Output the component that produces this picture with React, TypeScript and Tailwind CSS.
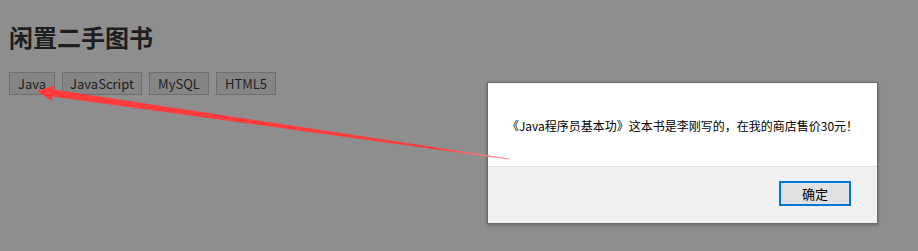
import React from 'react';

const tags = [
  { name: 'Java', w: 'w-[46px]' },
  { name: 'JavaScript', w: 'w-[80px]' },
  { name: 'MySQL', w: 'w-[60px]' },
  { name: 'HTML5', w: 'w-[60px]' },
];

export default function App() {
  return (
    <div className="relative w-[918px] h-[251px] overflow-hidden bg-[#8e8e8e] font-['Noto_Sans_CJK_SC',sans-serif]">
      {/* Page content (dimmed by modal overlay) */}
      <div className="pl-[9px] pt-[23px]">
        <h1 className="text-[24px] leading-[28px] font-bold text-[#1e1e1e]">闲置二手图书</h1>
        <div className="flex gap-[7px] mt-[21px]">
          {tags.map((t) => (
            <button
              key={t.name}
              className={`${t.w} h-[23px] border border-[#6f6f6f] bg-[#858585] text-[13px] leading-none text-[#1e1e1e]`}
            >
              {t.name}
            </button>
          ))}
        </div>
      </div>

      {/* Alert dialog */}
      <div className="absolute left-[487px] top-[82px] w-[391px] h-[142px] flex flex-col bg-white border border-[#6b6b6b] shadow-[0_1px_3px_rgba(0,0,0,0.3)]">
        <div className="h-[83px] flex items-center justify-center pt-[3px] text-[12px] text-black">
          《Java程序员基本功》这本书是李刚写的，在我的商店售价30元！
        </div>
        <div className="flex-1 flex justify-end items-start pt-[14px] pr-[26px] bg-[#f0f0f0] border-t border-[#dfdfdf]">
          <button className="w-[72px] h-[25px] border-2 border-[#0078d7] bg-[#e1e1e1] text-[13px] leading-none text-black">
            确定
          </button>
        </div>
      </div>

      {/* Annotation arrow */}
      <svg className="absolute inset-0 pointer-events-none" width="918" height="251" viewBox="0 0 918 251">
        <defs>
          <linearGradient id="fade" x1="37" y1="91" x2="509" y2="159" gradientUnits="userSpaceOnUse">
            <stop offset="0" stopColor="#ff3b3b" />
            <stop offset="0.85" stopColor="#ff3b3b" />
            <stop offset="1" stopColor="#ff9a9a" />
          </linearGradient>
        </defs>
        <polygon
          points="37,91 54,85.5 53.2,89.6 509,158.6 508.8,159.4 52.4,96.6 51.6,101"
          fill="url(#fade)"
        />
      </svg>
    </div>
  );
}
